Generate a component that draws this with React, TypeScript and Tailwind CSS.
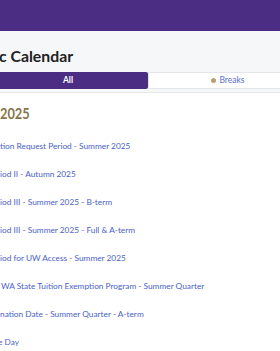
import React from "react";

const events = [
  { text: "tion Request Period - Summer 2025", shift: "ml-0" },
  { text: "iod II - Autumn 2025", shift: "ml-0" },
  { text: "iod III - Summer 2025 - B-term", shift: "ml-0" },
  { text: "iod III - Summer 2025 - Full & A-term", shift: "ml-0" },
  { text: "iod for UW Access - Summer 2025", shift: "ml-0" },
  { text: "WA State Tuition Exemption Program - Summer Quarter", shift: "ml-[1px]" },
  { text: "nation Date - Summer Quarter - A-term", shift: "ml-0" },
  { text: "e Day", shift: "-ml-[2px]" },
];

export default function App() {
  return (
    <div className="w-[280px] h-[351px] overflow-hidden bg-white font-['Lato',sans-serif]">
      {/* Top bar */}
      <div className="h-[31px] bg-[#4b2e83]" />

      {/* Title + tabs */}
      <div className="bg-[#f6f7f9] border-b border-[#e6e8ec] h-[62px] pt-[15px]">
        <h1 className="-ml-[1px] whitespace-nowrap font-bold text-[15.8px] leading-[20px] text-[#222]">
          c Calendar
        </h1>
        <div className="flex -ml-[12px] mt-[6px] h-[17px] w-[320px]">
          <div className="w-[160px] bg-[#4b2e83] rounded-r-[2px] flex items-center justify-center text-white font-bold text-[8.5px]">
            All
          </div>
          <div className="w-[160px] bg-white border border-[#e4e6ea] flex items-center justify-center gap-[3px] text-[#5b6fd1] text-[8.5px]">
            <span className="w-[5px] h-[5px] rounded-full bg-[#b5a274]" />
            Breaks
          </div>
        </div>
      </div>

      {/* Year section */}
      <div className="pt-[10px]">
        <h2 className="origin-left scale-x-[0.8] font-bold text-[16px] leading-[20px] text-[#85754d]">
          2025
        </h2>
        <ul className="mt-[9px]">
          {events.map((e, i) => (
            <li
              key={i}
              className={`h-[28px] flex items-center whitespace-nowrap text-[8.3px] text-[#4a5fc8] ${e.shift}`}
            >
              {e.text}
            </li>
          ))}
        </ul>
      </div>
    </div>
  );
}
